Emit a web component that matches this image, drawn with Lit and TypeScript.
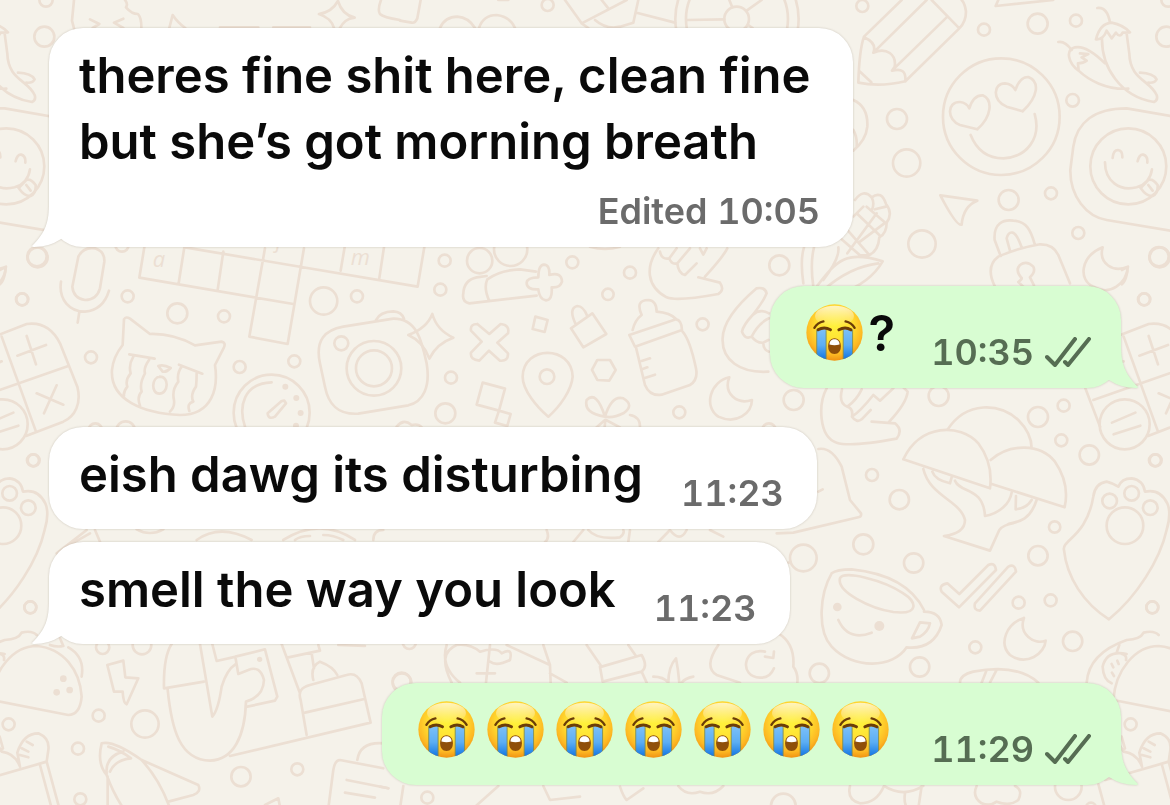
import { LitElement, html, css, svg, nothing } from "lit";
import { customElement, property } from "lit/decorators.js";

interface Message {
  side: "in" | "out";
  text: string;
  time: string;
  edited?: boolean;
  tail: boolean;
  follows?: boolean;
}

const SOB = "\u{1F62D}";

const MESSAGES: Message[] = [
  { side: "in", text: "theres fine shit here, clean fine but she’s got morning breath", time: "10:05", edited: true, tail: true },
  { side: "out", text: SOB + "?", time: "10:35", tail: true },
  { side: "in", text: "eish dawg its disturbing", time: "11:23", tail: false },
  { side: "in", text: "smell the way you look", time: "11:23", tail: true, follows: true },
  { side: "out", text: SOB.repeat(7), time: "11:29", tail: true },
];

/* One patch of the doodle wallpaper, drawn on a grid three times finer than the page. */
interface Patch {
  x: number;
  y: number;
  lines: string;
  rings: number[][];
  dots?: number[][];
}

const PATCHES: Patch[] = [
  {
    x: 0, y: 0,
    rings: [[138, 0, 20], [133, 110, 30]],
    lines: `M222 85L216 62Q220 20 222 0M375 0Q385 12 378 22Q395 42 414 42Q425 55 424 84M270 58L298 72L278 84M370 56L342 68L370 84
      M508 84L518 45Q535 70 556 84M1002 84C995 60 980 50 957 42C985 38 1002 25 1014 3C1022 30 1036 46 1064 53C1040 56 1030 66 1020 84
      M1143 0Q1132 30 1140 42Q1150 52 1200 60M660 82L775 82M820 82L930 82`,
  },
  {
    x: 400, y: 0,
    rings: [[443, 15, 18], [1010, 57, 37], [1011, 57, 153], [1011, 57, 185]],
    lines: `M62 0L52 55Q45 70 35 68L0 62M120 84Q135 50 172 50Q205 52 225 84M237 84Q250 45 290 45Q330 50 345 84
      M495 0L545 70L680 0M605 0L625 25M545 70L565 84M585 60Q620 90 660 80L700 68L715 0M710 38L825 68
      M860 60L973 58M988 0L997 22M1040 32L1085 0M1045 75L1058 84M295 0L325 0`,
  },
  {
    x: 760, y: 0,
    rings: [
      [307, 18, 18], [672, 89, 18], [833, 71, 30], [948, 62, 18], [411, 357, 30], [440, 489, 41], [938, 301, 19],
      [746, 600, 30], [873, 580, 18], [486, 732, 41], [955, 699, 18], [1197, 770, 29], [58, 796, 30],
      [724, 350, 175], [1105, 499, 114],
    ],
    lines: `M425 0L312 110Q298 150 295 248Q360 262 436 244L598 85Q618 65 618 35Q615 10 605 0M500 0L340 158Q352 130 312 112
      M340 158C380 140 410 165 404 200L396 212L560 52M396 212Q440 200 436 244M515 0L598 85M297 212L334 247M715 0L707 18L880 0
      M652 388L600 375C560 360 560 305 600 306Q620 308 628 325Q640 285 668 286C700 300 695 350 652 388
      M788 334L740 320C695 300 700 250 735 250Q757 252 766 270Q780 230 805 231C840 245 835 290 788 334
      M632 405Q660 475 730 475C800 472 845 415 824 342M280 300Q325 320 322 380Q318 420 280 452M280 390Q292 410 290 440
      M541 586L652 602Q610 618 605 674Q590 680 541 586M1012 24Q1042 20 1050 68M1008 118Q1020 70 1055 68Q1090 75 1110 97L1088 98Q1080 115 1068 98L1055 115L1040 92Q1030 120 1008 118
      M1026 115C1025 200 1080 290 1182 306Q1195 300 1190 285C1170 240 1110 240 1108 160L1100 100M1140 218Q1180 220 1190 238Q1185 250 1165 248
      M895 126Q915 122 935 150M956 212C925 190 915 150 945 142Q980 135 1035 190M956 212L954 190Q970 190 980 182L965 172L985 162L960 160
      M956 212C985 240 1040 270 1105 266M1300 360L1100 325C1000 325 950 370 940 440L931 510C930 590 980 650 1040 660L1300 704
      M1058 474Q1060 450 1074 450Q1088 452 1087 472M1133 484Q1138 462 1150 464Q1164 468 1162 488
      M1035 487C1035 545 1080 575 1130 562Q1170 550 1176 508M1142 564L1165 540Q1178 535 1193 555Q1195 580 1178 588Q1160 590 1142 564M1165 555L1178 572
      M285 600Q310 565 335 592Q365 570 378 612Q400 640 380 668Q380 700 358 712Q355 755 325 766L300 766M335 592Q345 610 335 632M378 620L345 628
      M320 620L376 668M290 640L358 705M262 690L325 762M245 718L300 766M350 640L262 760M376 668L300 725M310 620L280 650
      M132 742Q120 780 130 850M162 742Q150 790 160 860M235 742Q240 775 190 840M170 860C230 780 260 750 368 784Q330 850 240 880M190 870Q270 800 355 790
      M722 768L704 720C700 670 730 658 760 662C800 665 812 690 824 732M750 752L740 715Q745 695 758 698Q770 700 786 745
      M705 860Q675 800 715 770Q770 745 840 733Q880 732 895 765L930 850M790 860L775 846Q790 835 783 832Q765 810 780 795Q800 780 820 800Q828 815 810 832L822 856
      M1028 742C960 770 955 840 1000 860C1050 890 1100 850 1104 800C1060 820 1015 790 1028 742`,
  },
  {
    x: 760, y: 270,
    rings: [
      [1152, 88, 18], [101, 390, 30], [536, 378, 30], [834, 441, 30], [911, 407, 18], [904, 511, 18], [988, 555, 29],
      [1185, 571, 18], [336, 615, 18], [418, 689, 29], [884, 771, 17], [1115, 670, 22], [1049, 693, 22], [1171, 713, 22], [1095, 767, 55],
    ],
    lines: `M200 355C175 400 175 500 230 518Q270 532 410 506Q430 480 405 460L335 455M385 458Q440 400 443 365L430 352
      M246 358Q235 400 262 410Q280 415 276 440Q290 460 305 448L332 420M262 410Q290 390 305 358M276 440Q300 425 340 375L360 392L400 355
      M430 568C480 460 600 460 655 520Q700 580 690 655ZM562 480C620 390 720 400 775 450Q815 490 815 535
      M692 570C750 520 840 520 885 575Q930 640 914 712L695 642M490 597C510 680 600 690 615 750Q615 790 552 798L690 842L718 780Q730 765 760 760
      M585 632C600 670 670 650 675 738C720 730 750 700 755 668M517 605Q525 630 570 640L575 622M768 678L767 718Q800 715 815 690M830 690C810 750 780 755 745 762
      M175 537Q215 530 245 590L270 690L303 730Q305 740 295 742L100 788L50 790M175 665L188 658
      M912 840C905 810 980 800 1000 680Q1005 640 1040 635Q1060 640 1075 650Q1085 625 1115 625Q1150 630 1155 665Q1200 655 1222 700Q1235 730 1220 780
      C1200 870 1130 980 1047 1048C970 1000 920 920 912 840`,
  },
  {
    x: 0, y: 240,
    rings: [
      [113, 52, 30], [366, 15, 20], [67, 178, 18], [383, 169, 18], [532, 220, 30], [672, 229, 18], [273, 352, 18], [719, 381, 18],
      [883, 364, 18], [971, 183, 41], [1071, 169, 18], [101, 661, 18], [286, 570, 20], [377, 572, 28], [8, 553, 75],
      [815, 518, 114], [1122, 385, 82], [1122, 385, 54], [1024, 310, 21],
    ],
    dots: [[856, 440, 9], [889, 474, 9], [902, 519, 9], [888, 557, 9]],
    lines: `M0 90Q20 75 15 100Q10 125 0 133M-110 445L-66 560M-86 480L205 378M-30 295L80 252C130 245 160 270 180 310L232 440C245 490 225 530 190 545L78 588M5 290L108 575
      M-30 548L40 518M-25 583L55 557M52 347L138 315M80 288L108 373M110 460L190 494M170 436L132 520M-10 370L5 364
      M235 50Q250 20 285 25Q315 35 313 65L300 145Q290 180 255 180Q220 175 217 140ZM183 125C175 180 210 215 255 215Q310 210 327 152M238 216L233 248
      M433 22L418 113L880 192M553 22L536 130M670 35L653 150M795 25L748 290L863 312L912 25M555 22L1253 140L1273 22M1034 22L1022 92M1152 22L1138 115
      M372 238Q378 228 390 236L450 282Q520 280 585 316L665 305Q678 308 672 322L645 375C655 440 640 525 540 525C430 520 330 480 336 390Q340 350 368 315Z
      M388 343L464 356M537 374L607 401M400 350Q385 375 392 400Q375 420 382 440Q370 455 372 468M447 360Q430 385 435 400Q418 430 425 455Q410 470 420 497
      M545 380Q530 400 535 425Q515 450 522 480Q525 500 510 515M590 400Q590 425 588 440Q570 465 580 485Q560 490 568 513
      M475 378Q490 372 512 384Q500 397 488 395ZM480 410C508 410 506 460 478 461C452 460 455 412 480 410M735 560C715 500 730 430 815 427M853 482L858 490L825 530Q805 540 803 520L845 483Z
      M960 370C945 300 975 270 1030 260L1180 236C1250 235 1265 300 1280 370C1292 440 1270 485 1225 496L1075 521C1010 525 985 490 975 440ZM1128 240Q1140 215 1180 214Q1205 215 1212 236
      M410 868Q450 890 490 868M590 900Q660 850 755 900M850 900Q960 830 1065 900M885 900Q900 888 930 888M970 885Q1000 885 1030 900M1120 900Q1120 870 1150 870`,
  },
  {
    x: 390, y: 240,
    rings: [
      [164, 62, 18], [269, 62, 38], [362, 28, 50], [151, 149, 18], [547, 67, 18], [720, 98, 18], [654, 163, 17],
      [938, 253, 18], [183, 413, 18], [166, 520, 30], [471, 410, 22], [868, 517, 18], [1137, 570, 20],
    ],
    lines: `M238 190Q215 185 220 160Q222 120 260 112L290 108M298 183Q280 145 292 118Q330 90 390 88L438 95M238 190L440 167M600 20Q645 34 690 20
      M462 74Q480 75 478 105Q515 95 516 125Q510 145 485 142Q488 180 468 181Q448 178 445 148Q410 150 410 128Q412 112 445 112Q445 75 462 74
      M127 222Q140 270 190 293Q140 310 118 356Q100 305 55 285Q110 265 127 222
      M262 252L298 282L332 252Q360 255 354 280L322 308L354 340Q355 365 330 362L297 332L268 362Q240 360 243 338L275 305L243 272Q240 252 262 252
      M436 230L473 240L464 276L428 267ZM543 265L607 220L649 282L580 322ZM556 250Q535 205 562 198Q580 198 592 228
      M475 530C440 500 398 450 398 410C400 315 545 315 548 410C545 450 510 500 475 530M622 360L660 360L677 390L658 422L622 420L606 390Z
      M278 428L345 446L327 512L260 494ZM327 512L362 522L352 558L315 548ZM728 270Q735 240 755 225Q735 180 775 180Q800 182 800 215Q840 218 860 238
      M718 285L858 238Q875 240 876 270L735 320ZM738 322L765 435Q780 470 815 464L900 435Q925 420 918 385Q900 300 878 275M755 363L780 355M758 387L772 382M762 415L795 404
      M805 25C765 80 770 140 830 172Q860 185 985 162Q1005 150 990 128L925 112M945 110Q1000 50 1012 25M810 35Q815 60 838 55Q845 75 862 70Q865 100 885 105L920 70
      M838 55L860 25M862 70L900 25M930 25L940 44L950 25M1135 395C1050 400 995 360 998 295Q1000 230 1100 145Q1125 140 1130 160Q1120 185 1088 225
      Q1060 255 1056 275Q1065 300 1085 290Q1100 310 1120 308L1135 300M1088 225Q1110 205 1137 220M1085 290Q1105 250 1137 235M1120 308Q1120 330 1137 335
      M1018 412C960 425 940 500 985 530C1040 555 1085 520 1086 480C1040 495 1000 460 1018 412
      M645 530Q580 520 590 480Q620 450 645 530Q665 465 700 475Q735 495 700 520Q670 535 645 530M645 540L620 562M646 540L644 562M648 540L690 562M720 525Q750 530 750 560M20 560Q40 535 65 555Q85 550 95 562`,
  },
  {
    x: 760, y: 530,
    rings: [
      [130, 84, 40], [310, 43, 30], [461, 99, 29], [834, 77, 29], [776, 218, 18], [872, 211, 18], [1177, 232, 18],
      [646, 352, 18], [938, 334, 29], [479, 411, 29], [178, 430, 29], [1112, 583, 18], [70, 828, 37], [993, 833, 15], [925, 770, 40],
    ],
    dots: [[232, 231, 13], [358, 288, 15]],
    lines: `M215 130Q230 118 275 118Q440 135 492 240M215 130C180 190 170 300 215 350C280 420 400 415 440 352M240 145C230 185 330 235 400 246C480 255 470 215 430 190C370 150 250 120 240 145
      M492 245Q540 245 545 285Q520 360 440 352M480 277L510 280Q505 305 480 320L456 325ZM235 270Q265 335 335 308
      M562 160Q535 165 545 185L597 232L708 120Q705 95 685 105L598 192ZM745 110L645 220Q640 242 660 242L768 125Q765 100 745 110
      M792 264C740 280 715 340 750 375C800 410 855 370 857 332C820 345 775 310 792 264M600 458Q600 435 640 425Q770 400 835 458M665 458L680 420M690 458L710 420
      M1100 372Q1040 360 1028 410Q1030 450 1055 460M1078 345L1070 368M1055 402L1060 412M1072 392L1076 402M1056 428L1062 438M1085 620L1095 655L1088 660
      M372 768Q350 820 300 820Q260 810 270 768M372 768Q430 805 490 768M435 790Q430 825 445 835M485 768L475 835
      M650 768Q635 800 665 820Q690 830 710 815Q750 830 775 810Q790 780 765 768M1015 762L1035 835
      M55 310Q105 340 100 410Q115 430 112 458M78 100L92 96`,
  },
  {
    x: 0, y: 530,
    rings: [
      [91, 232, 18], [308, 352, 20], [426, 345, 28], [296, 557, 18], [435, 582, 41], [234, 656, 18],
      [241, 808, 18], [723, 740, 29], [892, 718, 18], [1205, 455, 27], [779, 388, 4],
    ],
    dots: [[190, 446, 10], [209, 480, 10], [170, 487, 10]],
    lines: `M-26 510C-20 420 40 348 110 348C190 355 240 420 245 500Q240 555 205 555ZM-106 458Q-100 370 14 330Q55 328 65 308Q95 300 110 315M205 352Q255 380 245 440M0 372Q15 375 12 390M150 345Q170 352 190 348L180 325
      M260 0L170 70M285 0L300 35M270 10L200 50M322 405L370 392L376 442L415 445L380 523Q370 520 368 485L342 485Z
      M515 342Q490 380 492 475L612 455M600 342L637 560Q655 540 665 470Q680 420 708 402M503 478C515 600 540 690 630 692C700 690 735 620 738 515Q790 500 792 450Q780 405 745 420L715 432L706 380L795 358L832 500L825 512L742 530
      M637 342L650 393L708 380M690 678L1112 578L1085 460Q1070 425 1040 435L930 465Q890 475 902 510L920 615M915 548L1090 508M940 450Q930 410 960 395Q1000 410 1012 435
      M845 342L900 490M862 383L960 362L955 345M935 370L942 415M1015 345L1095 348
      M305 640Q340 630 425 690L595 765Q605 785 580 795L505 815M305 640Q290 700 320 735Q340 790 370 835M425 690Q480 750 510 835M320 730Q315 680 370 665M330 725Q345 690 393 685Q360 660 325 650M323 740L323 835
      M1150 715L1020 690Q1005 690 1000 720L985 835M1072 690Q1080 635 1150 640M1040 750L1165 775M1035 788L1125 803M795 825L835 805L840 830
      M52 668Q70 610 115 610Q150 625 145 660L140 695M52 668L60 710M-50 750L140 695L178 835M120 705L155 835M80 635L98 645M65 655L85 665M60 675L85 682M-10 640L5 665Q45 670 60 710`,
  },
  {
    x: 380, y: 530,
    rings: [[66, 458, 28], [142, 803, 18], [88, 337, 20]],
    lines: `M215 458Q170 370 230 345Q270 340 300 365Q350 350 365 370Q400 350 390 390Q350 410 330 395M200 345Q180 410 240 458M330 345L318 458M290 430L345 430
      M380 345L510 405L512 458M490 345L510 405M510 430L560 458M620 345L665 410L785 375Q805 410 785 425L668 455L660 410M745 345L768 378M785 425L800 458
      M865 458Q865 410 888 385Q895 420 898 458M820 440Q850 440 865 458M940 440Q915 445 905 458M1015 345Q970 410 1010 435L1080 458M1155 365C1090 350 1075 440 1140 443Q1170 445 1182 415M1155 380L1180 384L1182 365
      M70 768L60 835M0 770L25 775M280 835L355 768M490 768L510 810L600 800M720 770Q730 800 740 810L790 775M895 768Q920 800 960 785Q1000 800 1030 768
      M580 36L610 0M625 0Q650 30 720 22Q735 10 730 0M750 0L745 36M835 36L870 0Q900 40 920 0M500 0Q510 25 495 36M990 0L1030 20`,
  },
];

@customElement("doodle-wall")
export class DoodleWall extends LitElement {
  static styles = css`
    :host {
      display: block;
      overflow: hidden;
      background: #f5f2ea;
    }
    .art {
      display: block;
      width: 100%;
      height: 100vh;
      fill: none;
      stroke: #ecdfd3;
      stroke-width: 8px;
      stroke-linecap: round;
      stroke-linejoin: round;
    }
    .solid {
      fill: #ecdfd3;
      stroke: none;
    }
    .letter {
      fill: #ecdfd3;
      stroke: none;
      font: italic 66px "Open Sans", sans-serif;
    }
  `;

  render() {
    return html`<svg class="art" aria-hidden="true">
      <g id="tile">
        ${PATCHES.map(
          (p) => svg`<g transform="translate(${p.x} ${p.y}) scale(0.3333)">
            <path d=${p.lines}></path>
            ${p.rings.map(([x, y, r]) => svg`<circle cx=${x} cy=${y} r=${r}></circle>`)}
            ${(p.dots ?? []).map(([x, y, r]) => svg`<circle class="solid" cx=${x} cy=${y} r=${r}></circle>`)}
          </g>`
        )}
        <g transform="translate(0 240) scale(0.3333)">
          <text class="letter" x="458" y="80">a</text>
          <text class="letter" x="1052" y="74">m</text>
          <text class="letter" x="828" y="24">j</text>
        </g>
      </g>
      <use href="#tile" x="-1122"></use>
      <use href="#tile" x="1122"></use>
    </svg>`;
  }
}

@customElement("sob-emoji")
export class SobEmoji extends LitElement {
  static styles = css`
    :host {
      display: inline-block;
      width: 57px;
      height: 57px;
      margin: 0 6px;
      vertical-align: -10px;
    }
    .face {
      display: block;
      width: 100%;
      height: 100%;
    }
  `;

  render() {
    return html`<svg class="face" viewBox="0 0 170 170" role="img" aria-label=${SOB}>
      <defs>
        <radialGradient id="skin" cx="0.5" cy="0.38" r="0.64">
          <stop offset="0" stop-color="#fff23c"></stop>
          <stop offset="0.5" stop-color="#ffdf32"></stop>
          <stop offset="0.8" stop-color="#fdb823"></stop>
          <stop offset="1" stop-color="#ee8c10"></stop>
        </radialGradient>
        <linearGradient id="shine" x1="0" y1="0" x2="0" y2="1">
          <stop offset="0" stop-color="#fff" stop-opacity="0.7"></stop>
          <stop offset="1" stop-color="#fff" stop-opacity="0"></stop>
        </linearGradient>
        <linearGradient id="tear" x1="0" y1="0" x2="0" y2="1">
          <stop offset="0" stop-color="#7cc0f8"></stop>
          <stop offset="0.5" stop-color="#5caef4"></stop>
          <stop offset="1" stop-color="#0a6fe0"></stop>
        </linearGradient>
        <clipPath id="head"><circle cx="85" cy="85" r="84"></circle></clipPath>
      </defs>
      <circle cx="85" cy="85" r="84" fill="url(#skin)"></circle>
      <ellipse cx="85" cy="36" rx="58" ry="31" fill="url(#shine)"></ellipse>
      <g clip-path="url(#head)">
        <path d="M32 75H60V170H32Z" fill="url(#tear)"></path>
        <path d="M111 75H139V170H111Z" fill="url(#tear)"></path>
        <path d="M32 78V170M60 78V170M111 78V170M139 78V170" stroke="#7d8a50" stroke-width="2.5"></path>
      </g>
      <g fill="none" stroke="#6b3d08" stroke-width="7" stroke-linecap="round">
        <path d="M25 71Q34 56 52 52"></path>
        <path d="M118 52Q136 56 145 71"></path>
      </g>
      <g fill="none" stroke="#6b3d08" stroke-width="9" stroke-linecap="round">
        <path d="M36 77Q54 66 73 77"></path>
        <path d="M98 77Q117 66 134 77"></path>
      </g>
      <path d="M85 102C98 102 104 113 104 126C104 140 97 149 85 149C73 149 66 140 66 126C66 113 72 102 85 102Z" fill="#8f4f0a"></path>
      <path d="M70 121C70 109 77 105 85 105C93 105 100 109 100 121Q85 125 70 121Z" fill="#fff"></path>
    </svg>`;
  }
}

@customElement("chat-bubble")
export class ChatBubble extends LitElement {
  @property({ attribute: false }) message!: Message;

  static styles = css`
    :host {
      display: flex;
    }
    .bubble {
      position: relative;
      display: flex;
      flex-wrap: wrap;
      justify-content: flex-end;
      align-items: flex-end;
      gap: 7px 38px;
      box-sizing: border-box;
      max-width: 75%;
      padding: 15px 33px 14px 30px;
      border-radius: 34px;
      background: #fff;
      color: #0a0a0a;
      filter: drop-shadow(0 0 1px rgba(60, 40, 20, 0.22));
    }
    .out {
      column-gap: 36px;
      margin-left: auto;
      padding-right: 30px;
      background: #d8fdd2;
    }
    .text {
      margin: 0 0 7px;
      font-size: 49px;
      font-weight: 600;
      line-height: 66px;
    }
    .in .text {
      margin-right: auto;
    }
    .meta {
      display: flex;
      align-items: center;
      gap: 11px;
      font-size: 36px;
      font-weight: 600;
      line-height: 44px;
      font-variant-numeric: tabular-nums;
      color: #6b6b6b;
    }
    .out .meta {
      color: #566d53;
    }
    .ticks {
      width: 46px;
      height: 30px;
      fill: none;
      stroke: currentColor;
      stroke-width: 4px;
      stroke-linecap: round;
      stroke-linejoin: round;
    }
    .tail {
      position: absolute;
      bottom: 0;
      left: -18px;
      width: 40px;
      height: 44px;
      fill: #fff;
    }
    .out .tail {
      left: auto;
      right: -18px;
      transform: scaleX(-1);
      fill: #d8fdd2;
    }
  `;

  private renderText(text: string) {
    return Array.from(text).map((ch) => (ch === SOB ? html`<sob-emoji></sob-emoji>` : ch));
  }

  render() {
    const m = this.message;
    return html`<article class="bubble ${m.side}">
      ${m.tail
        ? html`<svg class="tail" viewBox="0 0 40 44" aria-hidden="true">
            <path d="M18 0C18 19 15 29 1 43Q1 44 3 44Q18 44 30 36L40 20V0Z"></path>
          </svg>`
        : nothing}
      <p class="text">${m.text.includes(SOB) ? this.renderText(m.text) : m.text}</p>
      <div class="meta">
        <span>${m.edited ? "Edited " : ""}<time>${m.time}</time></span>
        ${m.side === "out"
          ? html`<svg class="ticks" viewBox="0 0 46 30" role="img" aria-label="Delivered">
              <path d="M2 20L10 28L30 2M20 25L23 28L44 2"></path>
            </svg>`
          : nothing}
      </div>
    </article>`;
  }
}

@customElement("app-root")
export class AppRoot extends LitElement {
  static styles = css`
    :host {
      display: grid;
      min-height: 100vh;
      overflow: hidden;
      font-family: Inter, "Liberation Sans", sans-serif;
    }
    .wall,
    .thread {
      grid-area: 1 / 1;
      min-width: 0;
    }
    .thread {
      position: relative;
      display: flex;
      flex-direction: column;
      gap: 39px;
      padding: 28px 49px 20px;
    }
    .follows {
      margin-top: -26px;
    }
  `;

  render() {
    return html`
      <doodle-wall class="wall"></doodle-wall>
      <main class="thread">
        ${MESSAGES.map((m) => html`<chat-bubble class=${m.follows ? "follows" : ""} .message=${m}></chat-bubble>`)}
      </main>
    `;
  }
}
